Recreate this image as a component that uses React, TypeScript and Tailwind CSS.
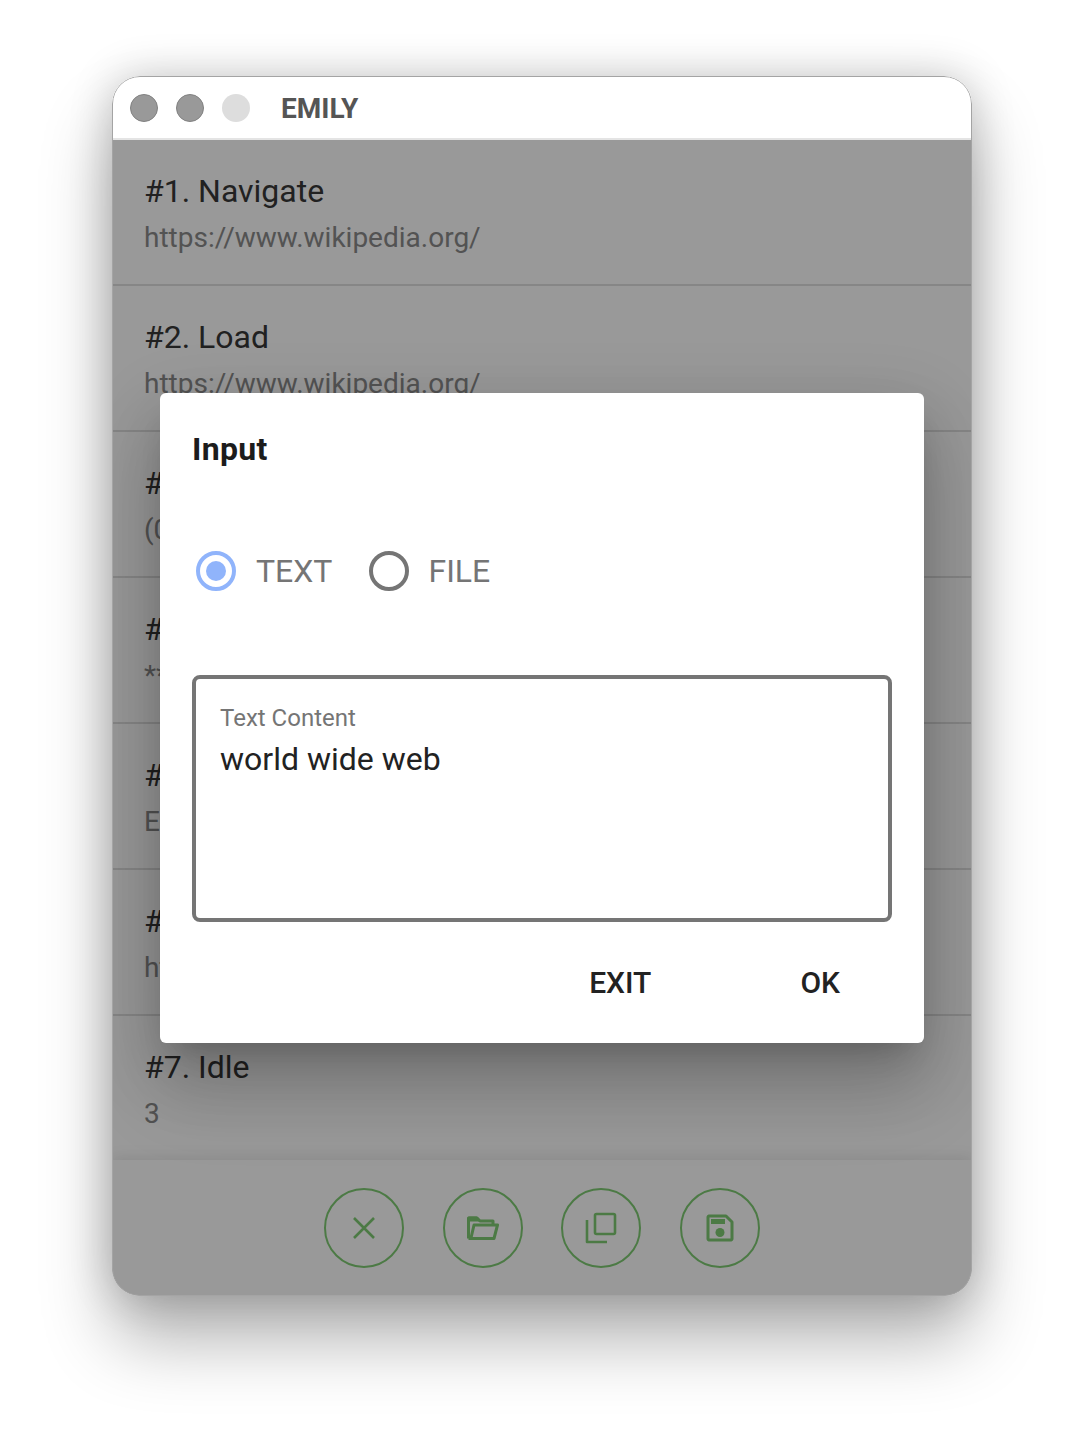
import React from "react";

const rows = [
  ["#1. Navigate", "https://www.wikipedia.org/"],
  ["#2. Load", "https://www.wikipedia.org/"],
  ["#3. Click", "(0, 0)"],
  ["#4. Type", "*****"],
  ["#5. Find", "Element"],
  ["#6. Load", "https://www.wikipedia.org/"],
  ["#7. Idle", "3"],
];

function CircleBtn({ children }: { children: React.ReactNode }) {
  return (
    <div className="w-20 h-20 rounded-full border-2 border-[#7fcc73] flex items-center justify-center text-[#7fcc73]">
      {children}
    </div>
  );
}

export default function App() {
  return (
    <div className="w-[1084px] h-[1444px] bg-white pt-[76px] pl-[112px] overflow-hidden font-['Roboto',sans-serif]">
      <div className="relative w-[860px] h-[1220px] rounded-[28px] overflow-hidden bg-white flex flex-col shadow-[0_44px_70px_rgba(0,0,0,0.3),0_0_44px_rgba(0,0,0,0.2)]">
        <div className="h-[64px] shrink-0 flex items-center pl-[18px] pt-[2px] bg-white border-b-2 border-[#e4e4e4]">
          <div className="w-7 h-7 rounded-full bg-[#999999] border border-[#808080]" />
          <div className="w-7 h-7 rounded-full bg-[#999999] border border-[#808080] ml-[18px]" />
          <div className="w-7 h-7 rounded-full bg-[#dddddd] ml-[18px]" />
          <div className="ml-[31px] text-[28px] leading-[36px] mt-[2px] font-bold text-[#555555]">EMILY</div>
        </div>
        <div className="relative flex-1 flex flex-col overflow-hidden">
          <div className="flex-1 overflow-hidden">
            {rows.map(([a, b]) => (
              <div key={a} className="h-[146px] shrink-0 px-[32px] pt-[28px] border-b-2 border-[#dfdfdf]">
                <div className="text-[32px] leading-[46px] text-[#383838]">{a}</div>
                <div className="text-[28px] leading-[46px] mt-[1px] text-[#8a8a8a]">{b}</div>
              </div>
            ))}
          </div>
          <div className="relative h-[136px] shrink-0 flex items-center justify-center gap-[38.67px] bg-white shadow-[0_-2px_14px_rgba(0,0,0,0.1)]">
            <CircleBtn>
              <svg width="24" height="24" viewBox="0 0 24 24" fill="none" stroke="currentColor" strokeWidth="2.6">
                <path d="M2 2 L22 22 M22 2 L2 22" />
              </svg>
            </CircleBtn>
            <CircleBtn>
              <svg width="32" height="24" viewBox="0 0 32 24" fill="none" stroke="currentColor" strokeWidth="3" strokeLinejoin="round">
                <path d="M1.5 22.5 V2 H10 L13 5 H26 V8" />
                <path d="M2 2 H9.5 L11 4 H2 Z" fill="currentColor" />
                <path d="M1.5 22.5 H27 L30.5 9 H7 L4 22" />
              </svg>
            </CircleBtn>
            <CircleBtn>
              <svg width="32" height="32" viewBox="0 0 32 32" fill="none" stroke="currentColor" strokeWidth="2.6" strokeLinejoin="round">
                <path d="M2 8 V30 H22" />
                <rect x="10" y="2" width="20" height="20" rx="1.5" />
              </svg>
            </CircleBtn>
            <CircleBtn>
              <svg width="28" height="28" viewBox="0 0 28 28" fill="none">
                <path d="M2 3 A1.5 1.5 0 0 1 3 2 H20 L26 8 V25 A1.5 1.5 0 0 1 25 26 H3 A1.5 1.5 0 0 1 2 25 Z" stroke="currentColor" strokeWidth="3" strokeLinejoin="round" />
                <rect x="5" y="5" width="14" height="5" fill="currentColor" />
                <circle cx="14" cy="18.5" r="4.5" fill="currentColor" />
              </svg>
            </CircleBtn>
          </div>
          <div className="absolute inset-0 bg-black/40" />
          <div className="absolute left-[48px] top-[253px] w-[764px] h-[650px] bg-white rounded-[6px] px-[32px] pt-[32px] shadow-[0_22px_70px_8px_rgba(0,0,0,0.14),0_48px_76px_6px_rgba(0,0,0,0.14),0_18px_30px_-14px_rgba(0,0,0,0.2)] flex flex-col">
            <div className="text-[32px] leading-[48px] font-bold tracking-[0.3px] text-[#1c1c1c]">Input</div>
            <div className="flex items-center mt-[78px] h-[40px] pl-[4px]">
              <div className="w-10 h-10 rounded-full border-4 border-[#90b4fb] flex items-center justify-center">
                <div className="w-5 h-5 rounded-full bg-[#90b4fb]" />
              </div>
              <span className="ml-[20px] text-[32px] text-[#757575]">TEXT</span>
              <div className="ml-[37px] w-10 h-10 rounded-full border-4 border-[#757575]" />
              <span className="ml-[19px] text-[32px] text-[#757575]">FILE</span>
            </div>
            <div className="mt-[84px] h-[247px] shrink-0 rounded-[8px] border-4 border-[#757575] px-[24px] pt-[23px]">
              <div className="text-[24px] leading-[32px] text-[#757575]">Text Content</div>
              <div className="text-[32px] leading-[50px] text-[#222222]">world wide web</div>
            </div>
            <div className="flex justify-end mt-[38px] text-[30px] leading-[46px] font-medium text-[#222222] pr-[52px]">
              <span>EXIT</span>
              <span className="ml-[149px]">OK</span>
            </div>
          </div>
        </div>
        <div className="absolute inset-0 rounded-[28px] border border-[#a4a4a4] pointer-events-none" />
      </div>
    </div>
  );
}
